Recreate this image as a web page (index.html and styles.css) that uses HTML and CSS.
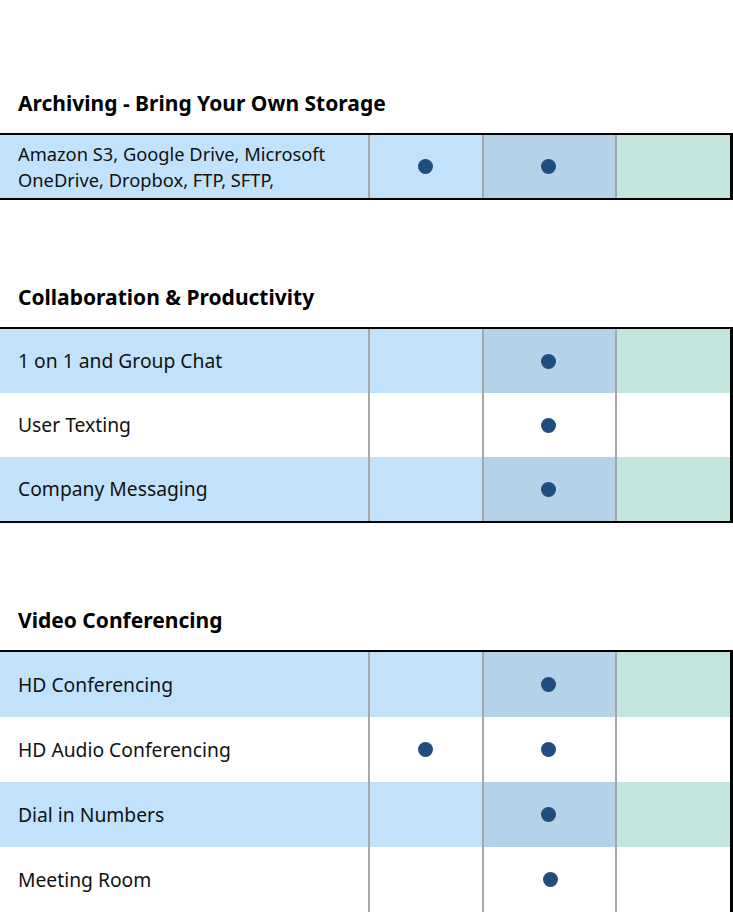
FILE: index.html
```html
<!DOCTYPE html>
<html lang="en">
<head>
<meta charset="utf-8">
<title>Feature comparison</title>
<link rel="stylesheet" href="styles.css">
</head>
<body>
<main class="page">
  <section class="section">
    <h2 class="heading">Archiving - Bring Your Own Storage</h2>
    <div class="table">
      <div class="row row--shaded row--tall">
        <div class="cell cell--label">Amazon S3, Google Drive, Microsoft<br>OneDrive, Dropbox, FTP, SFTP,</div>
        <div class="cell cell--a"><span class="dot"></span></div>
        <div class="cell cell--b"><span class="dot"></span></div>
        <div class="cell cell--c"></div>
      </div>
    </div>
  </section>

  <section class="section section--second">
    <h2 class="heading">Collaboration &amp; Productivity</h2>
    <div class="table table--compact">
      <div class="row row--shaded">
        <div class="cell cell--label">1 on 1 and Group Chat</div>
        <div class="cell cell--a"></div>
        <div class="cell cell--b"><span class="dot"></span></div>
        <div class="cell cell--c"></div>
      </div>
      <div class="row">
        <div class="cell cell--label">User Texting</div>
        <div class="cell cell--a"></div>
        <div class="cell cell--b"><span class="dot"></span></div>
        <div class="cell cell--c"></div>
      </div>
      <div class="row row--shaded">
        <div class="cell cell--label">Company Messaging</div>
        <div class="cell cell--a"></div>
        <div class="cell cell--b"><span class="dot"></span></div>
        <div class="cell cell--c"></div>
      </div>
    </div>
  </section>

  <section class="section">
    <h2 class="heading">Video Conferencing</h2>
    <div class="table table--open">
      <div class="row row--shaded">
        <div class="cell cell--label">HD Conferencing</div>
        <div class="cell cell--a"></div>
        <div class="cell cell--b"><span class="dot"></span></div>
        <div class="cell cell--c"></div>
      </div>
      <div class="row">
        <div class="cell cell--label">HD Audio Conferencing</div>
        <div class="cell cell--a"><span class="dot"></span></div>
        <div class="cell cell--b"><span class="dot"></span></div>
        <div class="cell cell--c"></div>
      </div>
      <div class="row row--shaded">
        <div class="cell cell--label">Dial in Numbers</div>
        <div class="cell cell--a"></div>
        <div class="cell cell--b"><span class="dot"></span></div>
        <div class="cell cell--c"></div>
      </div>
      <div class="row">
        <div class="cell cell--label">Meeting Room</div>
        <div class="cell cell--a"></div>
        <div class="cell cell--b"><span class="dot dot--shift"></span></div>
        <div class="cell cell--c"></div>
      </div>
    </div>
  </section>
</main>
</body>
</html>
```

FILE: styles.css
```css
* { box-sizing: border-box; }

html, body {
  margin: 0;
  padding: 0;
  background: #ffffff;
}

body {
  font-family: "Noto Sans", "Open Sans", sans-serif;
  color: #111111;
  overflow: hidden;
}

.page {
  padding-top: 88px;
  display: flex;
  flex-direction: column;
  gap: 82px;
}

.section--second {
  margin-bottom: 0;
}

.section {
  display: flex;
  flex-direction: column;
  gap: 15px;
}

.heading {
  margin: 0;
  padding-left: 18px;
  font-size: 21px;
  font-weight: 700;
  line-height: 30px;
  color: #000;
}

.table {
  width: 733px;
  border-top: 2px solid #000;
  border-bottom: 2px solid #000;
  border-right: 3px solid #000;
}

.table--open {
  border-bottom: none;
}

.row {
  display: grid;
  grid-template-columns: 368px 114px 133px 1fr;
  height: 65px;
  background: #ffffff;
}

.table--compact .row { height: 64px; }

.row--tall { height: 63px; }

.cell {
  display: flex;
  align-items: center;
  justify-content: center;
}

.cell--a, .cell--b, .cell--c {
  border-left: 2px solid #a7a7a7;
}

.cell--label {
  justify-content: flex-start;
  padding-left: 18px;
  font-size: 19.3px;
  line-height: 26px;
}

.row--tall .cell--label {
  font-size: 18.3px;
}

.row--shaded .cell--label,
.row--shaded .cell--a { background: #c2e2fb; }
.row--shaded .cell--b { background: #b4d2e8; }
.row--shaded .cell--c { background: #c3e5de; }

.dot {
  width: 15px;
  height: 15px;
  border-radius: 50%;
  background: #1f4d7e;
  margin-right: 2px;
}

.dot--shift { margin-right: 0; margin-left: 2px; }
```
